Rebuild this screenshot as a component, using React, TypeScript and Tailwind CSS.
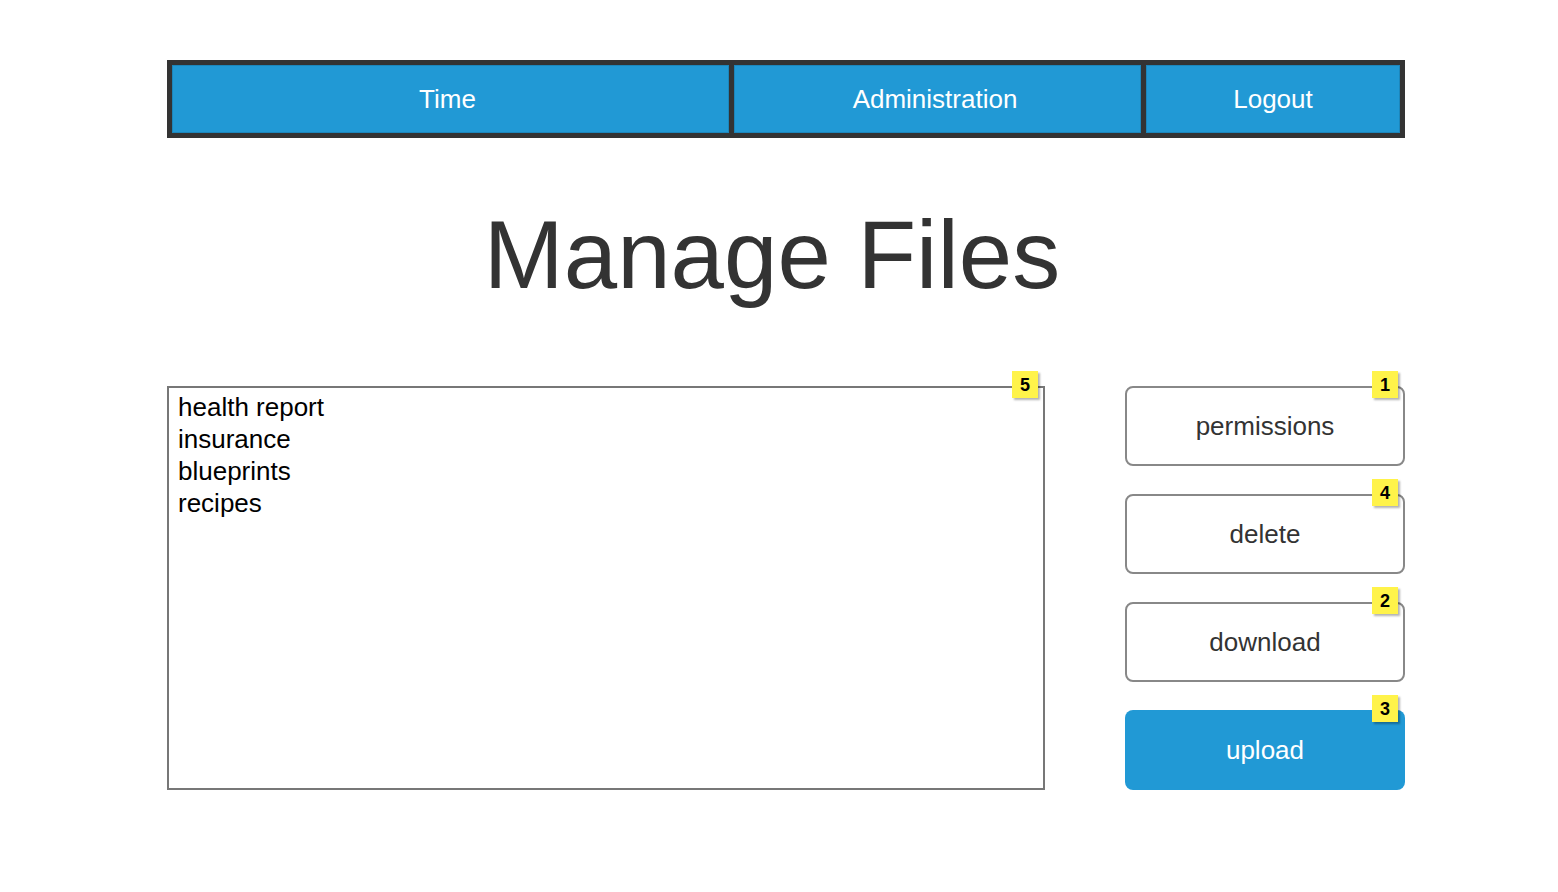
import React from "react";

function Badge({ n, bordered }: { n: string; bordered?: boolean }) {
  return (
    <div
      className={
        "absolute w-[26px] h-[27px] bg-[#fff34a] flex items-center justify-center text-[18px] font-bold text-black shadow-[2px_2px_2px_rgba(0,0,0,0.3)] leading-none " +
        (bordered ? "right-[5px] top-[-17px]" : "right-[7px] top-[-15px]")
      }
    >
      {n}
    </div>
  );
}

function Btn({ label, n, primary }: { label: string; n: string; primary?: boolean }) {
  return (
    <div
      className={
        "relative h-[80px] rounded-[8px] flex items-center justify-center text-[26px] " +
        (primary ? "bg-[#2199d5] text-white" : "border-2 border-[#888] bg-white text-[#333]")
      }
    >
      {label}
      <Badge n={n} bordered={!primary} />
    </div>
  );
}

export default function App() {
  return (
    <div className="w-[1558px] h-[892px] bg-white" style={{ fontFamily: '"Liberation Sans", Arial, sans-serif' }}>
      <div className="pt-[60px] pl-[167px]">
        <div className="w-[1238px] h-[78px] bg-[#333] p-[5px] flex gap-[5px]">
          <div className="w-[557px] h-full bg-[#2199d5] border border-[#1c86bb] flex items-center justify-center text-white text-[26px] pr-[6px]">Time</div>
          <div className="w-[407px] h-full bg-[#2199d5] border border-[#1c86bb] flex items-center justify-center text-white text-[26px] pr-[5px]">Administration</div>
          <div className="flex-1 h-full bg-[#2199d5] border border-[#1c86bb] flex items-center justify-center text-white text-[26px]">Logout</div>
        </div>
      </div>
      <div className="h-[248px] flex items-center justify-center text-[96px] text-[#333] leading-none pb-[14px] pr-[14px]">
        Manage Files
      </div>
      <div className="pl-[167px] flex gap-[80px]">
        <div className="relative w-[878px] h-[404px] border-2 border-[#777] pl-[9px] pt-[3px] text-[26px] leading-[32px] text-black">
          <div>health report</div>
          <div>insurance</div>
          <div>blueprints</div>
          <div>recipes</div>
          <Badge n="5" bordered />
        </div>
        <div className="w-[280px] flex flex-col gap-[28px]">
          <Btn label="permissions" n="1" />
          <Btn label="delete" n="4" />
          <Btn label="download" n="2" />
          <Btn label="upload" n="3" primary />
        </div>
      </div>
    </div>
  );
}
